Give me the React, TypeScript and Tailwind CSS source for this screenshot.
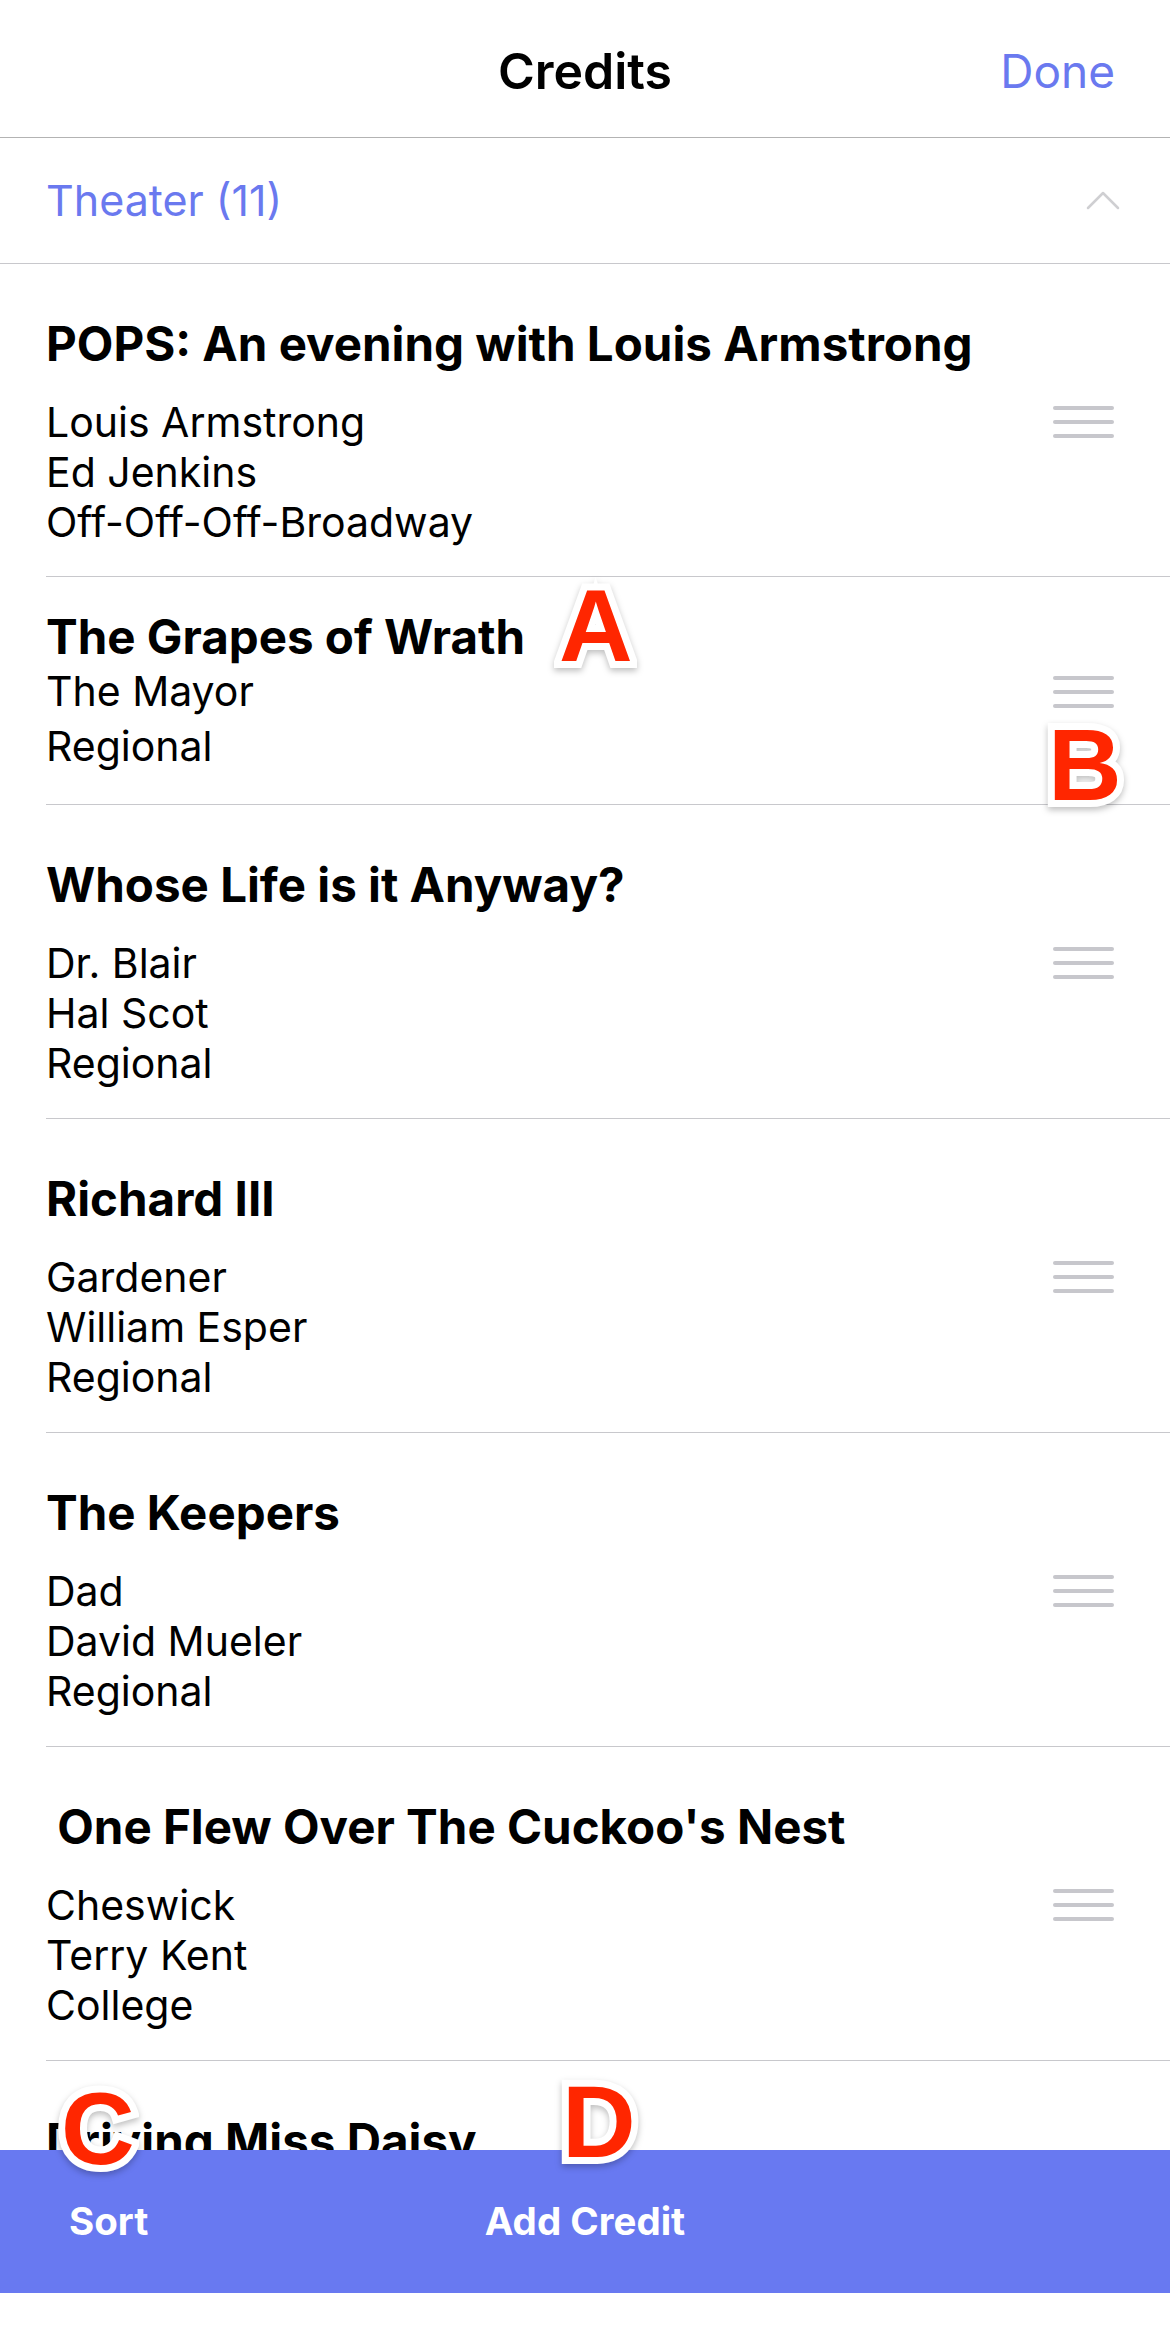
import React from 'react';

interface Credit {
  title: string;
  lines: string[];
}

const credits: Credit[] = [
  { title: 'POPS: An evening with Louis Armstrong', lines: ['Louis Armstrong', 'Ed Jenkins', 'Off-Off-Off-Broadway'] },
  { title: 'The Grapes of Wrath', lines: ['The Mayor', 'Regional'] },
  { title: 'Whose Life is it Anyway?', lines: ['Dr. Blair', 'Hal Scot', 'Regional'] },
  { title: 'Richard III', lines: ['Gardener', 'William Esper', 'Regional'] },
  { title: 'The Keepers', lines: ['Dad', 'David Mueler', 'Regional'] },
  { title: ' One Flew Over The Cuckoo\'s Nest', lines: ['Cheswick', 'Terry Kent', 'College'] },
  { title: 'Driving Miss Daisy', lines: ['Hoke', 'Stage Door', 'Community'] },
];

const DragHandle: React.FC = () => (
  <div className="flex w-[61px] flex-col gap-[10px]">
    <span className="h-[4px] rounded-full bg-[#c7c7cc]" />
    <span className="h-[4px] rounded-full bg-[#c7c7cc]" />
    <span className="h-[4px] rounded-full bg-[#c7c7cc]" />
  </div>
);

const CreditRow: React.FC<{ credit: Credit; compact?: boolean; first?: boolean }> = ({ credit, compact, first }) => {
  const lineHeight = compact ? 'leading-[55px]' : 'leading-[50px]';
  const padding = compact ? 'pt-[35px] pb-[30px]' : first ? 'pt-[55px] pb-[29px]' : 'pt-[55px] pb-[30px]';
  return (
    <div className="pl-[46px]">
      <div className={`border-b border-[#c8c8cc] pr-[56px] ${padding}`}>
        <p className="whitespace-pre text-[47.5px] font-bold leading-[50px] text-black">{credit.title}</p>
        <div className={`flex justify-between ${compact ? 'mt-[2px]' : 'mt-[28px]'}`}>
          <div className={`text-[41px] ${lineHeight} text-black`}>
            {credit.lines.map((line) => (
              <p key={line}>{line}</p>
            ))}
          </div>
          <div className={`flex items-center ${compact ? 'h-[55px]' : 'h-[50px]'}`}>
            <DragHandle />
          </div>
        </div>
      </div>
    </div>
  );
};

const Marker: React.FC<{ letter: string; className: string }> = ({ letter, className }) => (
  <span
    className={`absolute font-['Liberation_Sans',Arial,sans-serif] text-[102px] font-bold leading-none text-[#ff2600] [paint-order:stroke_fill] [-webkit-text-stroke:14px_white] drop-shadow-[0_3px_3px_rgba(0,0,0,0.25)] ${className}`}
  >
    {letter}
  </span>
);

export default function App() {
  return (
    <div className="relative flex h-[2333px] w-[1170px] flex-col overflow-hidden bg-white font-['Inter','Noto_Sans',sans-serif]">
      <header className="grid h-[138px] shrink-0 grid-cols-3 items-center border-b border-[#b3b3b3] pt-[6px]">
        <span />
        <h1 className="text-center text-[50px] font-semibold text-black">Credits</h1>
        <button type="button" className="justify-self-end pr-[55px] text-[46px] text-[#6a79ef]">
          Done
        </button>
      </header>

      <div className="flex h-[126px] shrink-0 items-center justify-between border-b border-[#c8c8cc] pl-[46px] pr-[50px]">
        <span className="text-[43px] text-[#6a79ef]">Theater (11)</span>
        <svg width="34" height="19" viewBox="0 0 34 19" fill="none">
          <path d="M2 17 L17 2 L32 17" stroke="#cfcfd2" strokeWidth="2.5" strokeLinecap="round" strokeLinejoin="round" />
        </svg>
      </div>

      <div className="flex-1 overflow-hidden">
        {credits.map((credit, i) => (
          <CreditRow key={credit.title} credit={credit} compact={i === 1} first={i === 0} />
        ))}
      </div>

      <div className="grid h-[143px] shrink-0 grid-cols-3 items-center bg-[#6879f1] text-[38.5px] font-bold text-white">
        <button type="button" className="justify-self-start pl-[69px]">Sort</button>
        <button type="button" className="justify-self-center">Add Credit</button>
        <span />
      </div>
      <div className="h-[40px] shrink-0 bg-white" />

      <Marker letter="A" className="left-[559px] top-[575px]" />
      <Marker letter="B" className="left-[1048px] top-[714px]" />
      <Marker letter="C" className="left-[61px] top-[2078px]" />
      <Marker letter="D" className="left-[562px] top-[2071px]" />
    </div>
  );
}
